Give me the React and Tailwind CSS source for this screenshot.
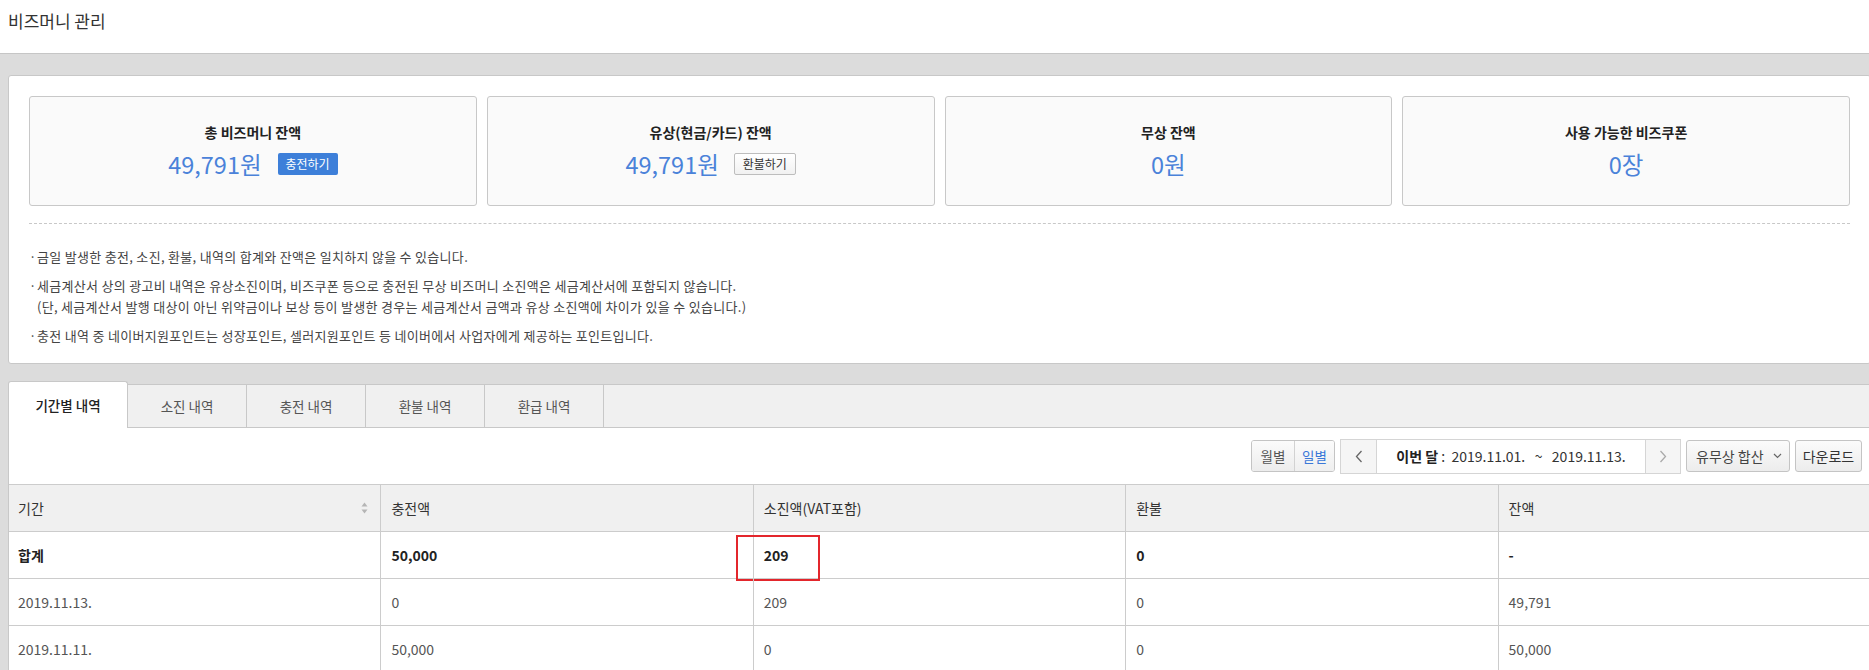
import React from "react";

function Card({ title, amount, button }) {
  return (
    <div className="h-[110px] bg-[#fafafa] border border-[#c8c8c8] rounded-[3px] flex flex-col items-center justify-center">
      <div className="text-[14px] font-bold text-[#222] leading-[18px]">{title}</div>
      <div className="mt-[8px] flex items-center h-[30px]">
        <span className="text-[23.5px] leading-[30px] text-[#4a82d9]">{amount}</span>
        {button}
      </div>
    </div>
  );
}

function SortIcon() {
  return (
    <svg width="7" height="12" viewBox="0 0 7 12" className="text-[#b5b5b5]">
      <path d="M3.5 0.5 L6.5 4.5 L0.5 4.5 Z" fill="currentColor" />
      <path d="M3.5 11.5 L6.5 7.5 L0.5 7.5 Z" fill="currentColor" />
    </svg>
  );
}

const rows = [
  { c: ["합계", "50,000", "209", "0", "-"], bold: true },
  { c: ["2019.11.13.", "0", "209", "0", "49,791"] },
  { c: ["2019.11.11.", "50,000", "0", "0", "50,000"] },
];

export default function App() {
  return (
    <div className="min-h-screen w-full overflow-hidden bg-[#dcdcdc] font-['Noto_Sans_CJK_KR','Noto_Sans',sans-serif]">
      <header className="h-[54px] bg-white border-b border-[#c6c6c6] pl-[8px] pt-[9px]">
        <h1 className="text-[17px] leading-[24px] text-[#333]">비즈머니 관리</h1>
      </header>

      <section className="mt-[21px] ml-[8px] w-[1863px] bg-white border border-[#c8c8c8] rounded-[3px] px-[20px] pt-[20px] pb-[17px]">
        <div className="grid grid-cols-4 gap-[10px]">
          <Card
            title="총 비즈머니 잔액"
            amount="49,791원"
            button={
              <button className="ml-[16px] h-[22px] w-[60px] rounded-[2px] bg-[#3d7fd9] text-white text-[12px] leading-[22px]">
                충전하기
              </button>
            }
          />
          <Card
            title="유상(현금/카드) 잔액"
            amount="49,791원"
            button={
              <button className="ml-[15px] h-[22px] w-[62px] rounded-[2px] border border-[#bdbdbd] bg-linear-to-b from-white to-[#f1f1f1] text-[#333] text-[12px] leading-[20px]">
                환불하기
              </button>
            }
          />
          <Card title="무상 잔액" amount="0원" />
          <Card title="사용 가능한 비즈쿠폰" amount="0장" />
        </div>

        <div className="mt-[17px] border-t border-dashed border-[#c8c8c8]" />

        <ul className="mt-[22px] text-[13px] tracking-[0.3px] leading-[21px] text-[#444]">
          <li className="flex">
            <span className="w-[8px] shrink-0">·</span>
            <div>금일 발생한 충전, 소진, 환불, 내역의 합계와 잔액은 일치하지 않을 수 있습니다.</div>
          </li>
          <li className="flex mt-[8px]">
            <span className="w-[8px] shrink-0">·</span>
            <div>
              <div>세금계산서 상의 광고비 내역은 유상소진이며, 비즈쿠폰 등으로 충전된 무상 비즈머니 소진액은 세금계산서에 포함되지 않습니다.</div>
              <div>(단, 세금계산서 발행 대상이 아닌 위약금이나 보상 등이 발생한 경우는 세금계산서 금액과 유상 소진액에 차이가 있을 수 있습니다.)</div>
            </div>
          </li>
          <li className="flex mt-[8px]">
            <span className="w-[8px] shrink-0">·</span>
            <div>충전 내역 중 네이버지원포인트는 성장포인트, 셀러지원포인트 등 네이버에서 사업자에게 제공하는 포인트입니다.</div>
          </li>
        </ul>
      </section>

      <section className="mt-[17px] ml-[8px] w-[1863px]">
        <div className="flex h-[47px]">
          <div className="w-[120px] h-[47px] bg-white border-t border-l border-r border-[#c8c8c8] rounded-t-[3px] flex items-center justify-center text-[13.5px] text-[#222] font-medium">
            기간별 내역
          </div>
          <div className="flex-1 mt-[3px] h-[44px] bg-[#f0f0f0] border-t border-b border-[#c8c8c8] flex">
            {["소진 내역", "충전 내역", "환불 내역", "환급 내역"].map((t) => (
              <div
                key={t}
                className="w-[119px] border-r border-[#c8c8c8] flex items-center justify-center text-[13.5px] text-[#555]"
              >
                {t}
              </div>
            ))}
          </div>
        </div>

        <div className="bg-white border-l border-[#c8c8c8]">
          <div className="h-[56px] flex items-center justify-end pr-[9px] gap-[4px]">
            <div className="flex h-[32px] rounded-[3px] border border-[#c4c4c4] overflow-hidden text-[13.5px]">
              <button className="w-[42px] bg-linear-to-b from-[#fbfbfb] to-[#ececec] text-[#555]">월별</button>
              <button className="w-[40px] border-l border-[#d2d2d2] bg-linear-to-b from-[#fbfbfb] to-[#efefef] text-[#3b78d8]">일별</button>
            </div>
            <div className="flex h-[35px] border border-[#d5d5d5] ml-[1px]">
              <div className="w-[36px] bg-[#f5f5f5] border-r border-[#d5d5d5] flex items-center justify-center">
                <svg width="8" height="13" viewBox="0 0 8 13">
                  <path d="M6.5 1 L1.5 6.5 L6.5 12" fill="none" stroke="#666" strokeWidth="1.3" />
                </svg>
              </div>
              <div className="w-[268px] flex items-center justify-center text-[14px] text-[#333] whitespace-pre">
                <span className="font-bold text-[#222]">이번 달</span>
                <span>{" :  2019.11.01.   ~   2019.11.13."}</span>
              </div>
              <div className="w-[35px] bg-[#f5f5f5] border-l border-[#d5d5d5] flex items-center justify-center">
                <svg width="8" height="13" viewBox="0 0 8 13">
                  <path d="M1.5 1 L6.5 6.5 L1.5 12" fill="none" stroke="#aaa" strokeWidth="1.3" />
                </svg>
              </div>
            </div>
            <button className="ml-[1px] w-[104px] h-[32px] rounded-[3px] border border-[#c4c4c4] bg-linear-to-b from-[#fbfbfb] to-[#ececec] flex items-center pl-[9px] text-[14px] text-[#444]">
              <span>유무상 합산</span>
              <svg width="9" height="6" viewBox="0 0 9 6" className="ml-[9px]">
                <path d="M1 1 L4.5 4.5 L8 1" fill="none" stroke="#666" strokeWidth="1.2" />
              </svg>
            </button>
            <button className="ml-[1px] w-[67px] h-[32px] rounded-[3px] border border-[#c4c4c4] bg-linear-to-b from-[#fbfbfb] to-[#ececec] text-[14px] text-[#333]">
              다운로드
            </button>
          </div>

          <div className="border-t border-[#cccccc]">
            <div className="grid grid-cols-5 h-[47px] bg-[#f0f0f0] border-b border-[#cccccc] text-[14px] text-[#333]">
              <div className="border-r border-[#cccccc] flex items-center justify-between pl-[9px] pr-[12px]">
                <span>기간</span>
                <SortIcon />
              </div>
              <div className="border-r border-[#cccccc] flex items-center pl-[10px]">충전액</div>
              <div className="border-r border-[#cccccc] flex items-center pl-[10px]">소진액(VAT포함)</div>
              <div className="border-r border-[#cccccc] flex items-center pl-[10px]">환불</div>
              <div className="flex items-center pl-[10px]">잔액</div>
            </div>
            {rows.map((r, i) => (
              <div
                key={i}
                className={
                  "grid grid-cols-5 h-[47px] border-b border-[#cccccc] text-[14px] " +
                  (r.bold ? "font-bold text-[#222]" : "text-[#555]")
                }
              >
                {r.c.map((v, j) => (
                  <div
                    key={j}
                    className={
                      "relative flex items-center " +
                      (j === 0 ? "pl-[9px] " : "pl-[10px] ") +
                      (j < 4 ? "border-r border-[#cccccc]" : "")
                    }
                  >
                    {v}
                    {r.bold && j === 2 && (
                      <div className="absolute left-[-18px] top-[3px] w-[84px] h-[46px] border-2 border-[#e3262c]" />
                    )}
                  </div>
                ))}
              </div>
            ))}
          </div>
        </div>
      </section>
    </div>
  );
}
